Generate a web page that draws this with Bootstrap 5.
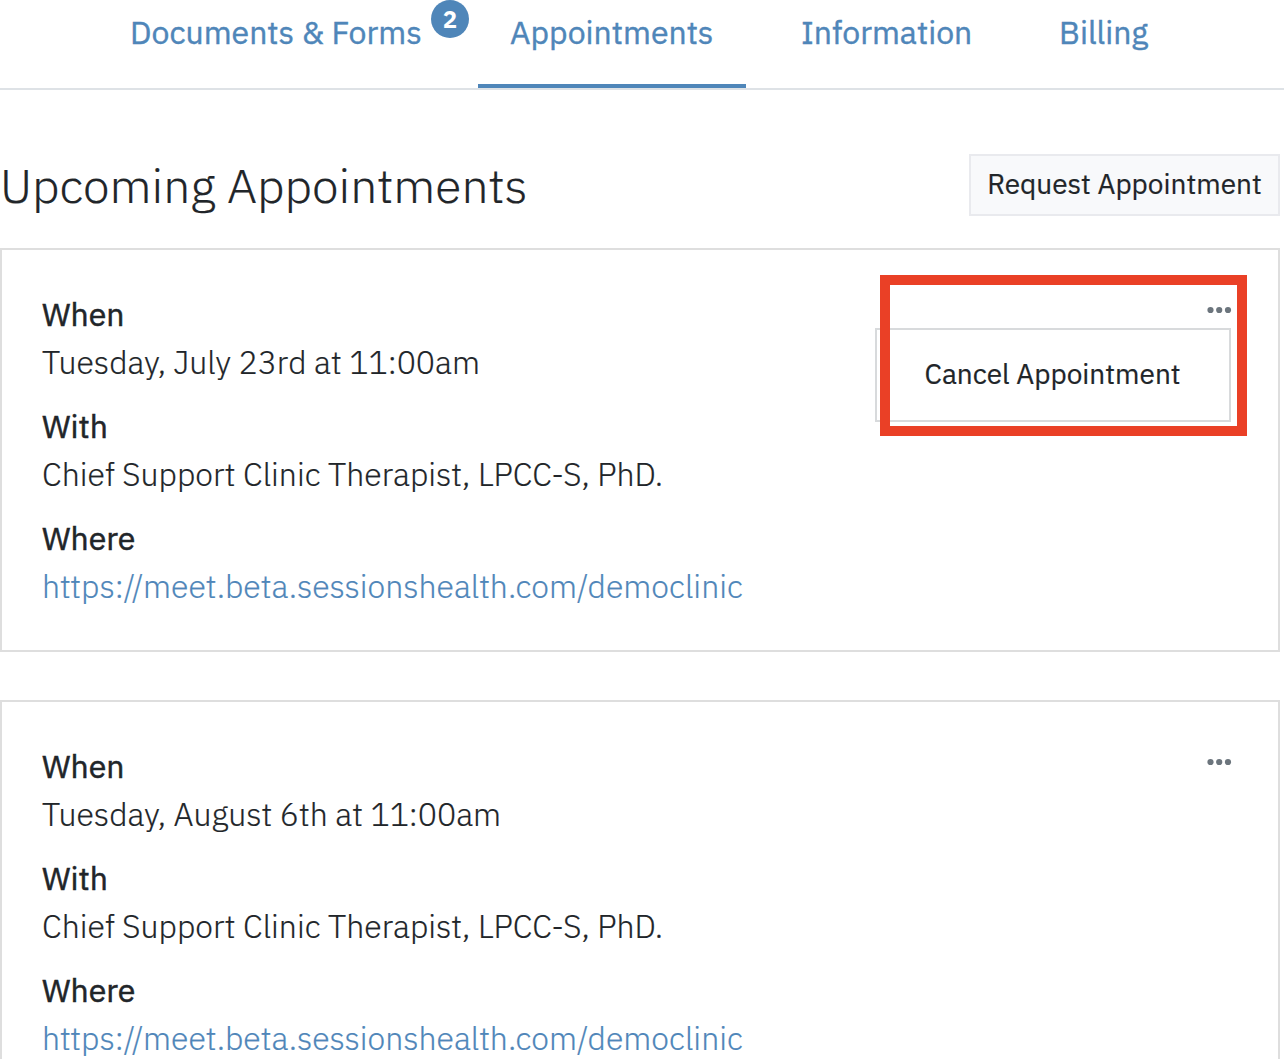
<!DOCTYPE html>
<html lang="en">
<head>
    <meta charset="UTF-8">
    <meta name="viewport" content="width=device-width, initial-scale=1.0">
    <title>Upcoming Appointments</title>
    <link rel="stylesheet" href="https://cdn.jsdelivr.net/npm/bootstrap@5.3.0/dist/css/bootstrap.min.css">
    <style>
        body {
            height: 100vh;
            font-family: 'IBM Plex Sans', Roboto, sans-serif;
            font-size: 32px;
            font-weight: 300;
            line-height: 48px;
            color: #212529;
            overflow: hidden;
            -webkit-text-stroke: .2px;
        }
        a {
            color: #4f86b9;
            text-decoration: none;
        }
        .portal {
            width: 1280px;
        }
        .portal-nav {
            height: 90px;
            border-bottom: 2px solid #dee2e6;
        }
        .portal-tabs {
            width: 1280px;
            gap: 24px;
        }
        .portal-tabs .nav-link {
            height: 88px;
            padding: 8px 0 0 32px;
            border-bottom: 4px solid transparent;
            color: #4f86b9;
            font-weight: 400;
            white-space: nowrap;
            -webkit-text-stroke: .4px;
        }
        .portal-tabs .nav-link.active {
            border-bottom-color: #4f86b9;
        }
        .portal-tabs .tab-documents { width: 356px; }
        .portal-tabs .tab-appointments { width: 268px; }
        .portal-tabs .tab-information { width: 234px; padding-left: 31px; }
        .portal-tabs .tab-billing { width: 154px; padding-left: 31px; }
        .tab-count {
            position: absolute;
            top: 0;
            right: -15px;
            width: 38px;
            height: 38px;
            background: #4f86b9;
            font-size: 24px;
            font-weight: 700;
            -webkit-text-stroke: 0;
        }
        .page-head {
            padding-top: 64px;
            margin-bottom: 32px;
        }
        .page-title {
            font-size: 48px;
            font-weight: 300;
            line-height: 58px;
        }
        .btn-request {
            width: 311px;
            height: 62px;
            padding: 0 0 2px;
            border: 2px solid #e9eaee;
            background: #f8f9fb;
            color: #212529;
            font-size: 28px;
            font-weight: 400;
        }
        .visit {
            height: 404px;
            padding: 40px 40px 24px;
            margin-bottom: 48px;
            border: 2px solid #dedede;
        }
        .visit dt {
            font-weight: 400;
            -webkit-text-stroke: .5px;
        }
        .visit dd {
            margin-bottom: 16px;
        }
        .btn-more {
            position: absolute;
            top: 50px;
            right: 46px;
            line-height: 0;
        }
        .cancel-menu {
            display: block;
            top: 78px;
            right: 47px;
            width: 356px;
            height: 94px;
            padding: 0;
            border: 2px solid #d8dadc;
            font-size: 28px;
        }
        .cancel-menu .dropdown-item {
            height: 90px;
            padding: 0 0 0 47.5px;
            line-height: 88px;
            color: #212529;
        }
        .callout-frame {
            position: absolute;
            z-index: 1010;
            top: 25px;
            right: 31px;
            width: 367px;
            height: 161px;
            border: 10px solid #ea4026;
            pointer-events: none;
        }
    </style>
</head>
<body>
    <nav class="portal-nav">
        <div class="nav portal-tabs flex-nowrap justify-content-center">
            <a class="nav-link position-relative tab-documents" href="#">Documents &amp; Forms
                <span class="tab-count rounded-circle text-white d-flex align-items-center justify-content-center">2</span>
            </a>
            <a class="nav-link active tab-appointments" href="#">Appointments</a>
            <a class="nav-link tab-information" href="#">Information</a>
            <a class="nav-link tab-billing" href="#">Billing</a>
        </div>
    </nav>

    <main class="portal">
        <div class="page-head d-flex justify-content-between align-items-center">
            <h1 class="page-title mb-0">Upcoming Appointments</h1>
            <button type="button" class="btn btn-request rounded-0">Request Appointment</button>
        </div>

        <section class="visit position-relative">
            <dl class="mb-0">
                <dt>When</dt>
                <dd>Tuesday, July 23rd at 11:00am</dd>
                <dt>With</dt>
                <dd>Chief Support Clinic Therapist, LPCC-S, PhD.</dd>
                <dt>Where</dt>
                <dd><a href="#">https://meet.beta.sessionshealth.com/democlinic</a></dd>
            </dl>
            <a class="btn-more" href="#" aria-label="More options">
                <svg width="26" height="20" viewBox="0 0 26 20" fill="#6c757d"><circle cx="4.5" cy="10" r="3.1"/><circle cx="13.2" cy="10" r="3.1"/><circle cx="22" cy="10" r="3.1"/></svg>
            </a>
            <div class="dropdown-menu cancel-menu rounded-0">
                <a class="dropdown-item" href="#">Cancel Appointment</a>
            </div>
            <!-- highlight around the open menu -->
            <div class="callout-frame"></div>
        </section>

        <section class="visit position-relative">
            <dl class="mb-0">
                <dt>When</dt>
                <dd>Tuesday, August 6th at 11:00am</dd>
                <dt>With</dt>
                <dd>Chief Support Clinic Therapist, LPCC-S, PhD.</dd>
                <dt>Where</dt>
                <dd><a href="#">https://meet.beta.sessionshealth.com/democlinic</a></dd>
            </dl>
            <a class="btn-more" href="#" aria-label="More options">
                <svg width="26" height="20" viewBox="0 0 26 20" fill="#6c757d"><circle cx="4.5" cy="10" r="3.1"/><circle cx="13.2" cy="10" r="3.1"/><circle cx="22" cy="10" r="3.1"/></svg>
            </a>
        </section>
    </main>

    <script src="https://cdn.jsdelivr.net/npm/bootstrap@5.3.0/dist/js/bootstrap.bundle.min.js"></script>
</body>
</html>
